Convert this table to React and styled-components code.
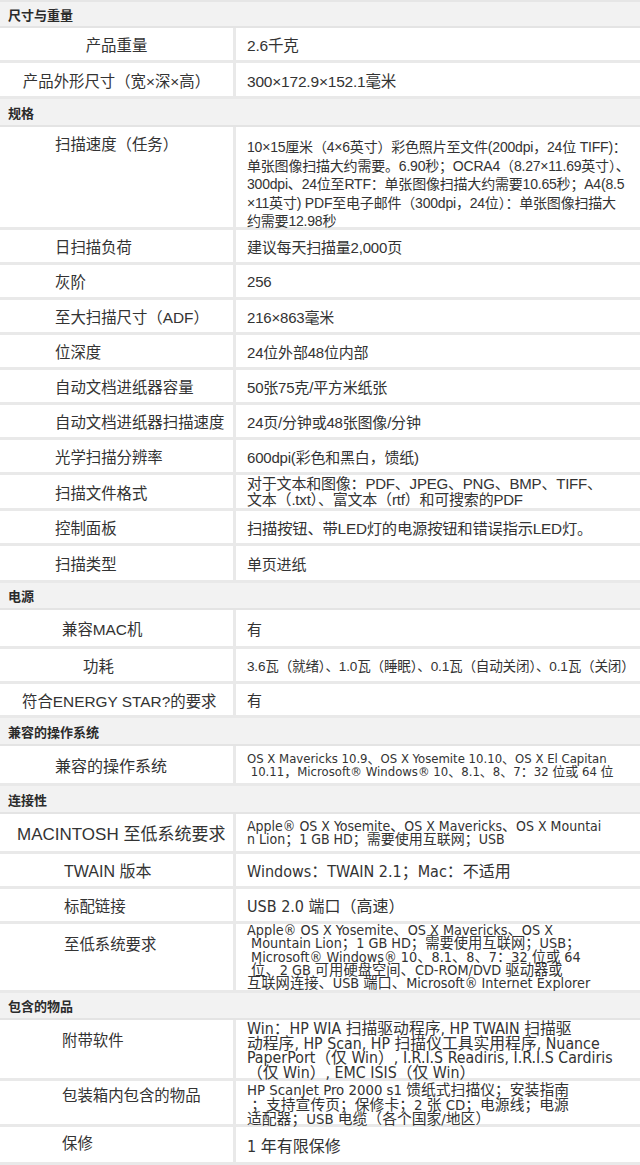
import React from 'react';
import styled, { createGlobalStyle } from 'styled-components';

const GlobalStyle = createGlobalStyle`
  html, body {
    margin: 0;
    padding: 0;
    background: #fff;
  }
  body {
    font-family: "Noto Sans CJK SC", "Liberation Sans", sans-serif;
    color: #333;
  }
`;

const CJK = `"Liberation Sans", "Noto Sans CJK SC", sans-serif`;
const NARROW = `"DejaVu Sans Condensed", "DejaVu Sans", "Noto Sans CJK SC", sans-serif`;

const sections = [
  {
    title: '尺寸与重量',
    h: 28,
    top: true,
    rows: [
      { label: '产品重量', center: true, h: 35, value: ['2.6千克'], kind: 'plain', size: 15.5 },
      { label: '产品外形尺寸（宽×深×高）', center: true, h: 36, value: ['300×172.9×152.1毫米'], kind: 'plain', size: 15.5 },
    ],
  },
  {
    title: '规格',
    h: 28,
    rows: [
      {
        label: '扫描速度（任务）', pad: 55, h: 103, labelTop: 5, valueTop: 11, kind: 'para', size: 14,
        value: [
          '10×15厘米（4×6英寸）彩色照片至文件(200dpi，24位 TIFF)：',
          '单张图像扫描大约需要。6.90秒；OCRA4（8.27×11.69英寸）、',
          '300dpi、24位至RTF：单张图像扫描大约需要10.65秒；A4(8.5',
          '×11英寸) PDF至电子邮件（300dpi，24位）：单张图像扫描大',
          '约需要12.98秒',
        ],
      },
      { label: '日扫描负荷', pad: 55, h: 35, value: ['建议每天扫描量2,000页'], kind: 'plain', size: 15 },
      { label: '灰阶', pad: 55, h: 35, value: ['256'], kind: 'plain', size: 15 },
      { label: '至大扫描尺寸（ADF）', pad: 55, h: 35, value: ['216×863毫米'], kind: 'plain', size: 15 },
      { label: '位深度', pad: 55, h: 35, value: ['24位外部48位内部'], kind: 'plain', size: 15 },
      { label: '自动文档进纸器容量', pad: 55, h: 35, value: ['50张75克/平方米纸张'], kind: 'plain', size: 15 },
      { label: '自动文档进纸器扫描速度', pad: 55, h: 35, value: ['24页/分钟或48张图像/分钟'], kind: 'plain', size: 15 },
      { label: '光学扫描分辨率', pad: 55, h: 35, value: ['600dpi(彩色和黑白，馈纸)'], kind: 'plain', size: 15 },
      {
        label: '扫描文件格式', pad: 55, h: 36, kind: 'para', size: 15, lh: 16,
        value: ['对于文本和图像：PDF、JPEG、PNG、BMP、TIFF、', '文本（.txt）、富文本（rtf）和可搜索的PDF'],
      },
      { label: '控制面板', pad: 55, h: 35, value: ['扫描按钮、带LED灯的电源按钮和错误指示LED灯。'], kind: 'plain', size: 15.3 },
      { label: '扫描类型', pad: 55, h: 37, value: ['单页进纸'], kind: 'plain', size: 15 },
    ],
  },
  {
    title: '电源',
    h: 27,
    rows: [
      { label: '兼容MAC机', pad: 62, h: 39, value: ['有'], kind: 'plain', size: 15 },
      { label: '功耗', pad: 83, h: 35, value: ['3.6瓦（就绪）、1.0瓦（睡眠）、0.1瓦（自动关闭）、0.1瓦（关闭）'], kind: 'plain', size: 13.6 },
      { label: '符合ENERGY STAR?的要求', pad: 22, h: 34, value: ['有'], kind: 'plain', size: 15 },
    ],
  },
  {
    title: '兼容的操作系统',
    h: 28,
    rows: [
      {
        label: '兼容的操作系统', pad: 55, h: 40, kind: 'narrow', size: 13, lh: 13, labelSize: 16,
        value: ['OS X Mavericks 10.9、OS X Yosemite 10.10、OS X El Capitan', ' 10.11，Microsoft® Windows® 10、8.1、8、7：32 位或 64 位'],
      },
    ],
  },
  {
    title: '连接性',
    h: 28,
    rows: [
      {
        label: 'MACINTOSH 至低系统要求', pad: 17, h: 40, kind: 'narrow', size: 14, lh: 13, labelSize: 17,
        value: ['Apple® OS X Yosemite、OS X Mavericks、OS X Mountai', 'n Lion；1 GB HD；需要使用互联网；USB'],
      },
      { label: 'TWAIN 版本', pad: 64, h: 35, kind: 'narrow', size: 16, value: ['Windows：TWAIN 2.1；Mac：不适用'], labelSize: 16 },
      { label: '标配链接', pad: 64, h: 35, kind: 'narrow', size: 16, value: ['USB 2.0 端口（高速）'] },
      {
        label: '至低系统要求', pad: 64, h: 69, labelTop: 8, kind: 'narrow', size: 14.3, lh: 13.3,
        value: [
          'Apple® OS X Yosemite、OS X Mavericks、OS X',
          ' Mountain Lion；1 GB HD；需要使用互联网；USB；',
          ' Microsoft® Windows® 10、8.1、8、7：32 位或 64',
          ' 位、2 GB 可用硬盘空间、CD-ROM/DVD 驱动器或',
          '互联网连接、USB 端口、Microsoft® Internet Explorer',
        ],
      },
    ],
  },
  {
    title: '包含的物品',
    h: 27,
    rows: [
      {
        label: '附带软件', pad: 62, h: 61, labelTop: 8, valueTop: 2, kind: 'narrow', size: 15.8, lh: 14.5,
        value: [
          'Win：HP WIA 扫描驱动程序, HP TWAIN 扫描驱',
          '动程序, HP Scan, HP 扫描仪工具实用程序, Nuance',
          'PaperPort（仅 Win）, I.R.I.S Readiris, I.R.I.S Cardiris',
          '（仅 Win）, EMC ISIS（仅 Win）',
        ],
      },
      {
        label: '包装箱内包含的物品', pad: 62, h: 46, labelTop: 2, valueTop: 2, kind: 'narrow', size: 14.8, lh: 14.5,
        value: [
          'HP ScanJet Pro 2000 s1 馈纸式扫描仪；安装指南',
          ' ；支持宣传页；保修卡；2 张 CD；电源线；电源',
          '适配器；USB 电缆（各个国家/地区）',
        ],
      },
      { label: '保修', pad: 62, h: 38, labelTop: 4, kind: 'narrow', size: 16, value: ['1 年有限保修'] },
    ],
  },
];

function SpecTable() {
  return (
    <Table>
      {sections.map((s) => (
        <React.Fragment key={s.title}>
          <Header $h={s.h} $top={s.top}>{s.title}</Header>
          {s.rows.map((r) => (
            <Row key={r.label} $h={r.h}>
              <Label $center={r.center} $pad={r.pad} $top={r.labelTop} $size={r.labelSize}>
                {r.label}
              </Label>
              <Value $kind={r.kind} $size={r.size} $lh={r.lh} $top={r.valueTop}>
                {r.value.map((line, i) => (
                  <Line key={i}>{line}</Line>
                ))}
              </Value>
            </Row>
          ))}
        </React.Fragment>
      ))}
    </Table>
  );
}

export default function App() {
  return (
    <>
      <GlobalStyle />
      <SpecTable />
    </>
  );
}

const Table = styled.div`
  width: 640px;
  display: flex;
  flex-direction: column;
`;

const Header = styled.div`
  box-sizing: border-box;
  height: ${(p) => p.$h}px;
  display: flex;
  align-items: center;
  padding-left: 8px;
  background: #f2f2f2;
  border-top: ${(p) => (p.$top ? '2px solid #e6e6e6' : 'none')};
  border-bottom: 2px solid #e4e4e4;
  font-family: "Noto Sans CJK SC", sans-serif;
  font-weight: 700;
  font-size: 13px;
  color: #2b2b2b;
`;

const Row = styled.div`
  box-sizing: border-box;
  height: ${(p) => p.$h}px;
  display: grid;
  grid-template-columns: 236px 1fr;
  border-bottom: 3px solid #e9e9e9;
  background: #fff;
`;

const Label = styled.div`
  display: flex;
  align-items: ${(p) => (p.$top !== undefined ? 'flex-start' : 'center')};
  justify-content: ${(p) => (p.$center ? 'center' : 'flex-start')};
  padding-left: ${(p) => (p.$center ? 0 : p.$pad)}px;
  padding-top: ${(p) => p.$top || 0}px;
  border-right: 3px solid #e9e9e9;
  font-family: ${CJK};
  font-size: ${(p) => p.$size || 15.4}px;
  color: #333;
  white-space: nowrap;
`;

const Value = styled.div`
  display: flex;
  flex-direction: column;
  justify-content: ${(p) => (p.$top !== undefined ? 'flex-start' : 'center')};
  padding-top: ${(p) => p.$top || 0}px;
  padding-left: 11px;
  font-family: ${(p) => (p.$kind === 'narrow' ? NARROW : CJK)};
  font-size: ${(p) => p.$size}px;
  line-height: ${(p) => (p.$lh ? `${p.$lh}px` : p.$kind === 'para' ? '18.6px' : 'normal')};
  letter-spacing: ${(p) => (p.$kind === 'narrow' ? '0' : '-0.2px')};
  color: #333;
  white-space: pre;
`;

const Line = styled.span`
  display: block;
`;
